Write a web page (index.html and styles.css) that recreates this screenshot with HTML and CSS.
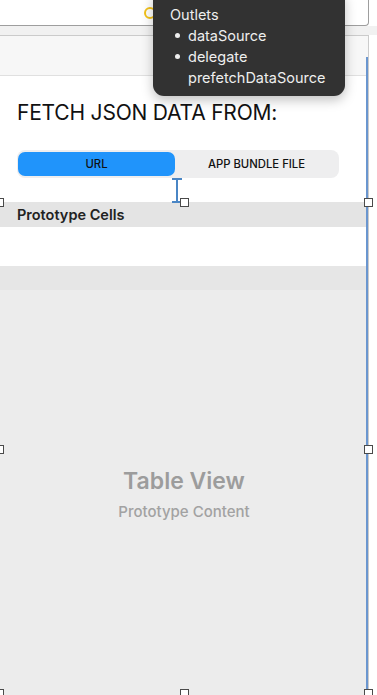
FILE: index.html
```html
<!DOCTYPE html>
<html>
<head>
    <meta charset="UTF-8">
    <title>Table View</title>
    <link rel="stylesheet" href="styles.css">
</head>
<body>
<div class="toolbar"><i class="ring"></i></div>
<div class="strip"></div>
<div class="canvas">
    <div class="navbar"></div>
    <div class="content">
        <h1 class="title">FETCH JSON DATA FROM:</h1>
        <div class="segment">
            <a class="on" href="javascript:;">URL</a>
            <a href="javascript:;">APP BUNDLE FILE</a>
        </div>
        <div class="table">
            <div class="head">Prototype Cells</div>
            <div class="cell"></div>
            <div class="foot"></div>
            <div class="empty">
                <p class="big">Table View</p>
                <p class="small">Prototype Content</p>
            </div>
        </div>
    </div>
</div>

<div class="tip">
    <p>Outlets</p>
    <ul>
        <li class="dot">dataSource</li>
        <li class="dot">delegate</li>
        <li>prefetchDataSource</li>
    </ul>
</div>
<div class="edge"></div>
<div class="beam"><i class="v"></i><i class="t"></i><i class="b"></i></div>
<i class="grip l t1"></i><i class="grip m t1"></i><i class="grip r t1"></i>
<i class="grip l t2"></i><i class="grip r t2"></i>
<i class="grip l t3"></i><i class="grip m t3"></i><i class="grip r t3"></i>
</body>
</html>
```
FILE: styles.css
```css
*{margin:0;padding:0;box-sizing:border-box;}
ul,li{list-style:none;}
a{text-decoration:none;color:inherit;}
html,body{height:695px;}
body{position:relative;width:377px;overflow:hidden;background:#fff;font-family:Inter,"Noto Sans",sans-serif;color:#111;display:flex;flex-direction:column;}

.toolbar{height:26px;width:369px;flex:none;border-bottom:1px solid #9e9e9e;border-right:1px solid #9e9e9e;border-bottom-right-radius:4px;background:#fff;display:flex;align-items:center;padding-left:144px;}
.ring{display:block;width:12px;height:12px;border:2.5px solid #f2c21b;border-radius:50%;}
.strip{height:9px;flex:none;background:#f1f1f1;}
.canvas{flex:1;width:369px;border-top:1px solid #cbcbcb;border-right:1px solid #cbcbcb;background:#fff;display:flex;flex-direction:column;}
.navbar{height:40px;flex:none;background:#f7f7f7;border-bottom:1px solid #e0e0e0;}
.content{flex:1;display:flex;flex-direction:column;padding-top:24px;}
.title{font-size:21px;line-height:26px;font-weight:400;color:#111;padding-left:17px;letter-spacing:-0.2px;}
.segment{margin:24px 0 24px 17px;width:322px;height:28px;padding:2px 1px;border-radius:8px;background:#eeeeef;display:grid;grid-template-columns:157px 1fr;}
.segment a{display:flex;align-items:center;justify-content:center;font-size:11.3px;font-weight:500;color:#111;border-radius:7px;}
.segment a.on{background:#2094fb;}

.table{flex:1;display:flex;flex-direction:column;}
.head{height:25px;background:#e4e4e4;padding-left:17px;font-size:14.5px;font-weight:600;line-height:25px;color:#222;}
.cell{height:39px;background:#fff;}
.foot{height:24px;background:#e6e6e6;}
.empty{flex:1;background:#ececec;text-align:center;padding-top:176px;color:#9c9c9c;}
.big{font-size:23px;line-height:30px;font-weight:600;}
.small{margin-top:6px;font-size:15px;line-height:20px;font-weight:500;color:#a2a2a2;}

/* outlets popover */
.tip{position:absolute;left:153px;top:-10px;width:192px;height:106px;padding:14px 0 0 17px;border-radius:11px;background:#323232;box-shadow:0 4px 12px rgba(0,0,0,0.25);color:#eee;font-size:14.5px;line-height:21px;}
.tip li{padding-left:18px;position:relative;}
.tip li.dot:before{content:'';position:absolute;left:5px;top:8px;width:5px;height:5px;border-radius:50%;background:#eee;}

/* selection overlay */
.edge{position:absolute;left:366px;top:57px;bottom:0;width:2px;background:#6a96cf;}
.beam i{position:absolute;background:#4a86c5;}
.beam .v{left:176px;top:179px;width:1.5px;height:22px;}
.beam .t{left:172px;top:178px;width:10px;height:1.5px;}
.beam .b{left:172px;top:201px;width:10px;height:1.5px;}
.grip{position:absolute;width:9px;height:9px;border:1px solid #4a4a4a;background:#fff;}
.grip.l{left:-5px;}
.grip.m{left:180px;}
.grip.r{left:364px;}
.grip.t1{top:198px;}
.grip.t2{top:445px;}
.grip.t3{top:689px;}
```
